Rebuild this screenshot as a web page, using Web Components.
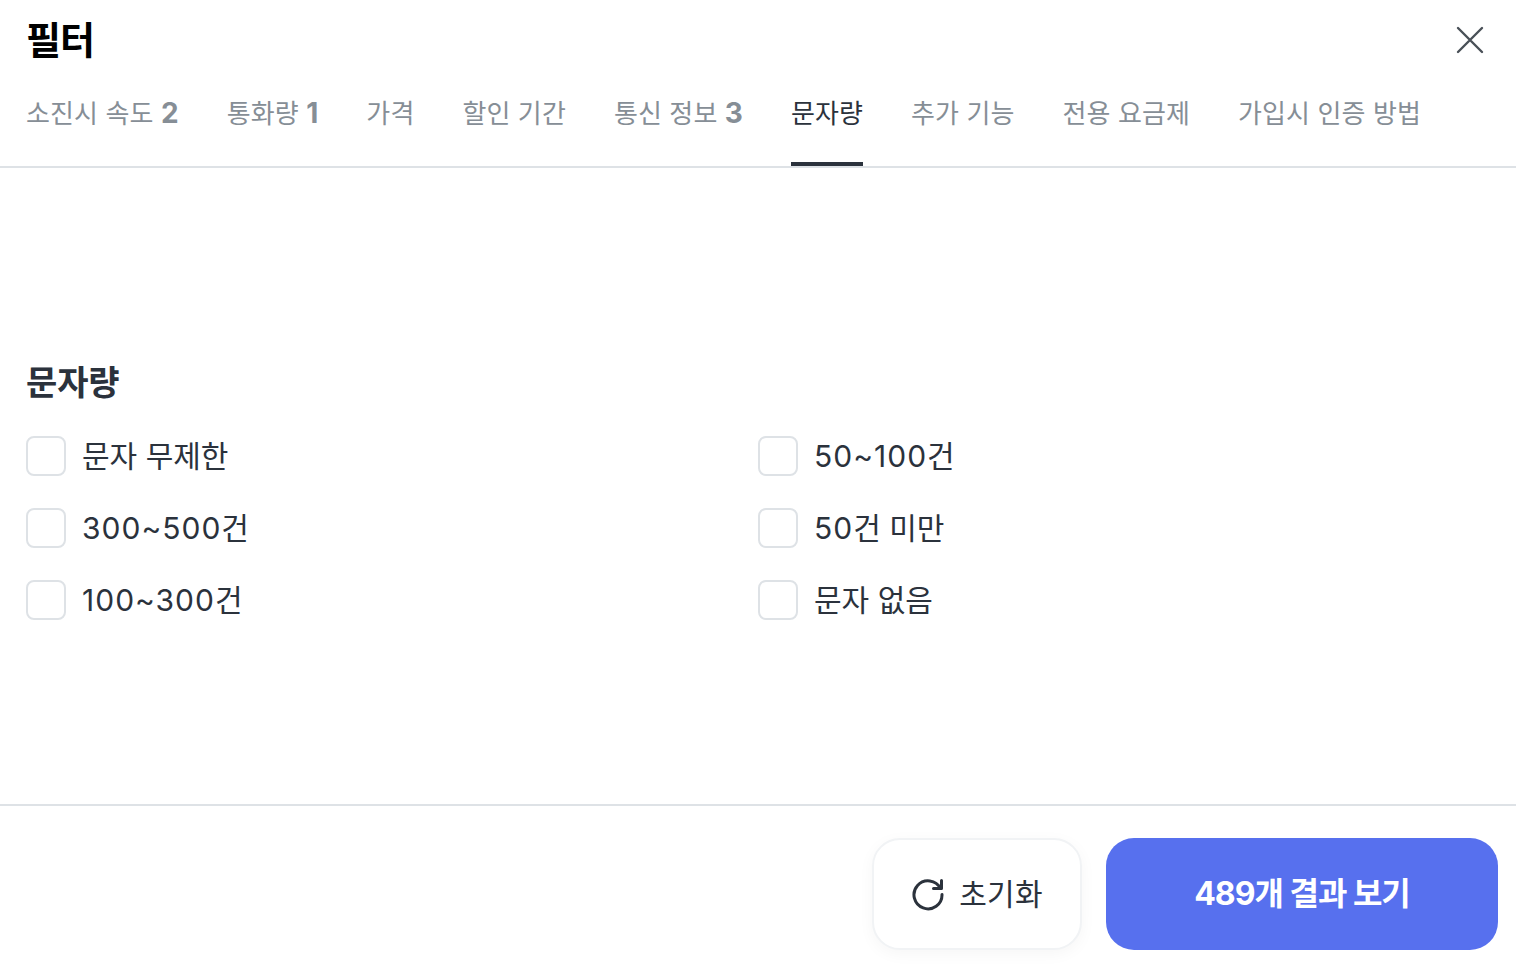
<!DOCTYPE html>
<html lang="ko"><head><meta charset="utf-8"><title>필터</title>
<style>
html,body{margin:0;height:100%;background:#fff}
body{font-family:Inter,"Noto Sans CJK KR","Noto Sans",sans-serif}
</style></head><body>
<filter-modal>
  <filter-tab>소진시 속도 <b>2</b></filter-tab>
  <filter-tab>통화량 <b>1</b></filter-tab>
  <filter-tab>가격</filter-tab>
  <filter-tab>할인 기간</filter-tab>
  <filter-tab>통신 정보 <b>3</b></filter-tab>
  <filter-tab active>문자량</filter-tab>
  <filter-tab>추가 기능</filter-tab>
  <filter-tab>전용 요금제</filter-tab>
  <filter-tab>가입시 인증 방법</filter-tab>
  <filter-section slot="body" title="문자량">
    <filter-check>문자 무제한</filter-check>
    <filter-check><i>50~100</i>건</filter-check>
    <filter-check><i>300~500</i>건</filter-check>
    <filter-check><i>50</i>건 미만</filter-check>
    <filter-check><i>100~300</i>건</filter-check>
    <filter-check>문자 없음</filter-check>
  </filter-section>
</filter-modal>
<script>
const FONT='Inter,"Noto Sans CJK KR","Noto Sans",sans-serif';
class Base extends HTMLElement{
  render(html){this.attachShadow({mode:'open'}).innerHTML=html}
}
customElements.define('filter-tab',class extends Base{
  constructor(){super();this.render(`<style>
  :host{display:flex;align-items:flex-start;height:87px;box-sizing:border-box;padding-top:16px;
    font:400 26px/38px ${FONT};letter-spacing:.1px;color:#868e96;white-space:nowrap;flex:none;border-bottom:4px solid transparent}
  :host([active]){color:#2b323c;border-bottom-color:#2b323c}
  ::slotted(b){font-weight:700;font-size:28px;line-height:1}
  </style><span><slot></slot></span>`)}
});
customElements.define('filter-check',class extends Base{
  constructor(){super();this.render(`<style>
  :host{display:flex;align-items:center;gap:16px;height:40px;font:400 30px/40px ${FONT};color:#2b323c}
  .box{width:40px;height:40px;box-sizing:border-box;border:2px solid #dee2e6;border-radius:8px;background:#fff;flex:none}
  ::slotted(i){font-style:normal;letter-spacing:1px}
  </style><span class="box"></span><span><slot></slot></span>`)}
});
customElements.define('filter-section',class extends Base{
  constructor(){super();this.render(`<style>
  :host{display:block;padding:0 26px}
  h3{margin:0 0 30px;font:700 34px/46px ${FONT};letter-spacing:-.1px;color:#2b323c}
  .grid{display:grid;grid-template-columns:732px 1fr;row-gap:32px}
  </style><h3>${this.getAttribute('title')}</h3><div class="grid"><slot></slot></div>`)}
});
customElements.define('filter-modal',class extends Base{
  constructor(){super();this.render(`<style>
  :host{display:flex;flex-direction:column;height:968px;width:1516px;overflow:hidden;background:#fff}
  header{display:flex;justify-content:space-between;align-items:center;height:79px;padding:0 32px 0 26px;flex:none;box-sizing:border-box}
  h2{margin:0;font:700 38px/56px ${FONT};letter-spacing:-1px;color:#000}
  button{font-family:inherit;cursor:pointer}
  .close{all:unset;display:flex;width:28px;height:28px}
  nav{display:flex;gap:48px;padding:0 26px;height:89px;box-sizing:border-box;border-bottom:2px solid #dee2e6;flex:none}
  main{flex:1;min-height:0;display:flex;flex-direction:column;justify-content:center;padding-top:8px}
  footer{flex:none;height:164px;box-sizing:border-box;border-top:2px solid #dee2e6;display:flex;justify-content:flex-end;align-items:flex-start;gap:24px;padding:32px 18px 0 0}
  .reset{width:210px;height:112px;box-sizing:border-box;border:2px solid #f1f3f5;border-radius:28px;background:#fff;box-shadow:0 4px 16px rgba(0,0,0,.04);display:flex;align-items:center;justify-content:center;gap:14px;font:400 30px/40px ${FONT};letter-spacing:.3px;color:#2b323c}
  .go{width:392px;height:112px;border:0;border-radius:28px;background:#5770ee;color:#fff;font:700 32px/44px ${FONT};letter-spacing:-1px}
  </style>
  <header><h2>필터</h2><button class="close" aria-label="닫기"><svg width="28" height="28" viewBox="0 0 28 28" fill="none" stroke="#495057" stroke-width="2.4" stroke-linecap="round"><path d="M2 2 26 26M26 2 2 26"/></svg></button></header>
  <nav><slot></slot></nav>
  <main><slot name="body"></slot></main>
  <footer>
    <button class="reset"><svg width="34" height="34" viewBox="0 0 34 34" fill="none" stroke="#2b323c" stroke-width="3" stroke-linecap="round" stroke-linejoin="round"><path d="M29.5 11.5A14 14 0 1 0 31 17.5"/><path d="M30.5 3.5V11.5H22.5"/></svg>초기화</button>
    <button class="go">489개 결과 보기</button>
  </footer>`)}
});
</script>
</body></html>
